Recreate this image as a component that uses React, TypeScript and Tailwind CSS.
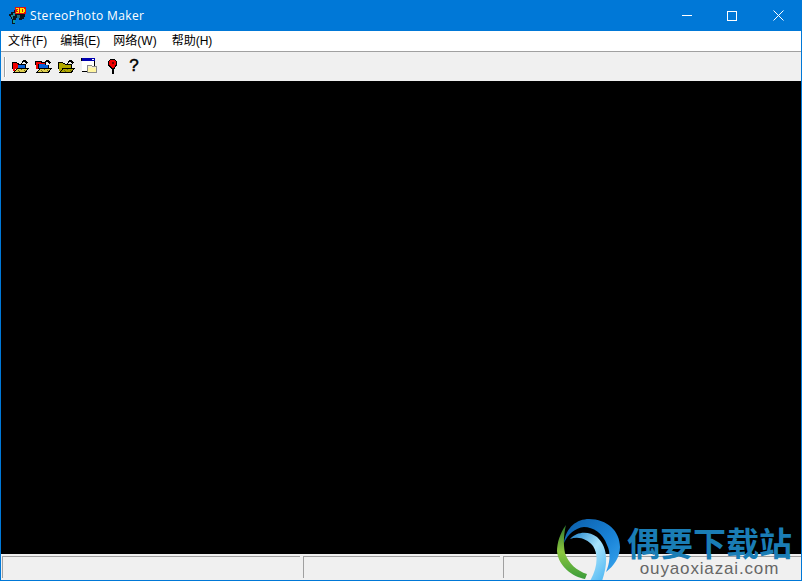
const ui = "font-['Liberation_Sans','Noto_Sans_CJK_SC',sans-serif]";

function AppIcon() {
  return (
    <svg width="17" height="17" viewBox="0 0 17 17" shapeRendering="crispEdges">
      <path d="M0 7h2V5h3V3h8v3h3v4h-1v2h-2v1h-3v-2H7v2H6v4H3v-5H2v-2H1V9H0z" fill="#0a1620" />
      <path d="M2 8h2V6h2v3H4v3H3z" fill="#1d8a9c" />
      <path d="M4 13h2v3H4z" fill="#0e9aa0" />
      <path d="M8 8h3v3H8z" fill="#1d6f80" />
      <path d="M6 0h11v7H6z" fill="#e01010" />
      <path d="M7 1h3v5H7V5h2V4H8V3h1V2H7zM11 1h4v1h1v3h-1v1h-4zM13 2v3h1V2z" fill="#ffe600" />
    </svg>
  );
}

function Arrow() {
  return <path d="M9 5h1V3h1V2h3v1h1v1h1v1h-1v1h-1V5h-1V4h-2v1h-1v1H9z" fill="#000" />;
}

function Hatch({ fill }: { fill: string }) {
  return (
    <>
      <path d="M5 10h12l-3 5H1z" fill="#000" />
      <path d="M5 11h10l-2 3H3z" fill={fill} />
      <path d="M6 12h1v1H6zM9 11h1v1H9zM12 12h1v1h-1zM7 13h1v1H7z" fill="#6d6718" />
    </>
  );
}

function FolderOne() {
  return (
    <svg width="17" height="15" viewBox="0 0 17 15" shapeRendering="crispEdges">
      <Arrow />
      <path d="M0 4h5v1h2v1h7v5H0z" fill="#000" />
      <path d="M1 5h4v1h1v5H1zM1 11h2v2H1z" fill="#f00000" />
      <path d="M6 7h7v3H6z" fill="#0a62d8" />
      <Hatch fill="#e0d050" />
    </svg>
  );
}

function FolderTwo() {
  return (
    <svg width="17" height="15" viewBox="0 0 17 15" shapeRendering="crispEdges">
      <Arrow />
      <path d="M0 3h7v1h4v3h3v4H1z" fill="#000" />
      <path d="M1 4h5v1h4v1H4v5H1z" fill="#f00000" />
      <path d="M4 6h6v1h3v3H4z" fill="#0a62d8" />
      <path d="M3 6h1v5H3z" fill="#000" />
      <Hatch fill="#e0d050" />
    </svg>
  );
}

function FolderThree() {
  return (
    <svg width="17" height="15" viewBox="0 0 17 15" shapeRendering="crispEdges">
      <Arrow />
      <path d="M0 4h5v1h2v1h7v5H0z" fill="#000" />
      <path d="M1 5h4v1h2v1h6v3H1zM1 10h3v3H1z" fill="#b0a800" />
      <Hatch fill="#b0a800" />
    </svg>
  );
}

function WindowIcon() {
  return (
    <svg width="17" height="15" viewBox="0 0 17 15" shapeRendering="crispEdges">
      <path d="M1 0h13v3H1z" fill="#0000b0" />
      <path d="M11 1h2v1h-2z" fill="#fff" />
      <path d="M1 3h12v10H1z" fill="#fff" />
      <path d="M0 0h1v14h6v-1H1V3H0z" fill="#000" />
      <path d="M13 3h1v5h-1z" fill="#000" />
      <path d="M6 7h4l1 1h5v7H6z" fill="#8a8a8a" />
      <path d="M7 8h3l1 1h4v1H7z" fill="#f4f0c8" />
      <path d="M7 10h8v4H7z" fill="#fff5a0" />
    </svg>
  );
}

function PinIcon() {
  return (
    <svg width="11" height="15" viewBox="0 0 11 15" shapeRendering="crispEdges">
      <path d="M3 0h5v1h1v1h1v5H9v1H8v2H7v5H5v-5H4V9H3V8H2V7H1V2h1V1h1z" fill="#000" />
      <path d="M3 1h5v1h1v4H8v2H7v1H5V8H4V7H3V6H2V2h1z" fill="#f00000" />
      <path d="M5 3h2v2H5z" fill="#700000" />
    </svg>
  );
}

function Watermark() {
  return (
    <div className="absolute right-[9px] -bottom-px flex items-end gap-[6px]">
      <svg width="64" height="62" viewBox="0 0 64 62">
        <defs>
          <linearGradient id="wmBlue" x1="0" y1="0" x2="1" y2="1">
            <stop offset="0" stopColor="#0a5ba6" />
            <stop offset="0.6" stopColor="#1a84d8" />
            <stop offset="1" stopColor="#3aa6ee" />
          </linearGradient>
          <linearGradient id="wmGreen" x1="0" y1="0" x2="0" y2="1">
            <stop offset="0" stopColor="#2f7a2e" />
            <stop offset="0.5" stopColor="#8cc63f" />
            <stop offset="1" stopColor="#3a9c3a" />
          </linearGradient>
          <linearGradient id="wmCyan" x1="0" y1="0" x2="1" y2="1">
            <stop offset="0" stopColor="#1a7fc8" />
            <stop offset="0.5" stopColor="#a8e4fc" />
            <stop offset="1" stopColor="#4ab4f2" />
          </linearGradient>
        </defs>
        <path d="M7 24C9 8 20 0 32 0C50 0 63 12 63 28C63 38 57 47 49 53C53 44 54 34 50 26C46 14 36 8 27 8C18 9 11 15 7 24Z" fill="url(#wmBlue)" />
        <path d="M9 6C3 14 0 24 0 32C1 47 16 58 28 60L30 55C20 52 11 44 8 34C6 24 7 14 9 6Z" fill="url(#wmGreen)" />
        <path d="M13 20C20 12 32 12 40 18C50 27 52 42 45 62L33 62C40 50 42 36 36 27C30 20 22 17 13 20Z" fill="url(#wmCyan)" />
      </svg>
      <div className="mb-[3px] flex flex-col items-center">
        <span className="font-['Noto_Sans_CJK_SC',sans-serif] text-[33px] leading-[33px] font-bold text-[#1a7db5]">偶要下载站</span>
        <span className="font-['Liberation_Sans',sans-serif] text-[17px] leading-[19px] tracking-[0.85px] text-[#666666]">ouyaoxiazai.com</span>
      </div>
    </div>
  );
}

export default function App() {
  const menus = ["文件(F)", "编辑(E)", "网络(W)", "帮助(H)"];

  return (
    <div className={`relative flex h-[581px] w-[802px] flex-col overflow-hidden border-x border-b border-[#0078d7] bg-[#f0f0f0] ${ui}`}>
      <header className="-mx-px flex h-[31px] shrink-0 items-center bg-[#0078d7] pr-px pl-[9px] text-white">
        <AppIcon />
        <span className="ml-[4px] font-['Open_Sans',sans-serif] text-[12px] tracking-[0.35px]">StereoPhoto Maker</span>
        <div className="ml-auto flex h-full items-center">
          <button className="flex h-full w-[45px] items-center justify-center">
            <span className="h-px w-[10px] bg-white" />
          </button>
          <button className="flex h-full w-[46px] items-center justify-center">
            <span className="h-[10px] w-[10px] border border-white" />
          </button>
          <button className="flex h-full w-[46px] items-center justify-center">
            <svg width="11" height="11" viewBox="0 0 11 11" stroke="white" strokeWidth="1">
              <path d="M.5.5l10 10M10.5.5l-10 10" />
            </svg>
          </button>
        </div>
      </header>

      <nav className="box-content flex h-[20px] shrink-0 items-center gap-[13px] border-b border-[#a0a0a0] bg-white pl-[7px] text-[12px] text-black">
        {menus.map((m) => (
          <span key={m} className="last:ml-[2px]">{m}</span>
        ))}
      </nav>

      <div className="flex h-[29px] shrink-0 items-start gap-[6px] bg-[#f0f0f0] pt-[6px] pl-[3px]">
        <span className="mt-[-1px] h-[20px] w-[2px] border-l border-[#a0a0a0] bg-white" />
        <FolderOne />
        <FolderTwo />
        <FolderThree />
        <WindowIcon />
        <span className="ml-[3px] pt-px"><PinIcon /></span>
        <span className="ml-[3px] w-[14px] text-center font-['Liberation_Sans',sans-serif] text-[17px] leading-[16px] text-black [-webkit-text-stroke:0.5px_black]">?</span>
      </div>

      <main className="flex-1 bg-black" />

      <footer className="flex h-[26px] shrink-0 gap-[3px] bg-[#f0f0f0] pt-[2px] pb-[2px] pl-px">
        <div className="w-[298px] border-t border-l border-[#a0a0a0]" />
        <div className="w-[197px] border-t border-l border-[#a0a0a0]" />
        <div className="flex-1 border-t border-l border-[#a0a0a0]" />
      </footer>

      <Watermark />
    </div>
  );
}
